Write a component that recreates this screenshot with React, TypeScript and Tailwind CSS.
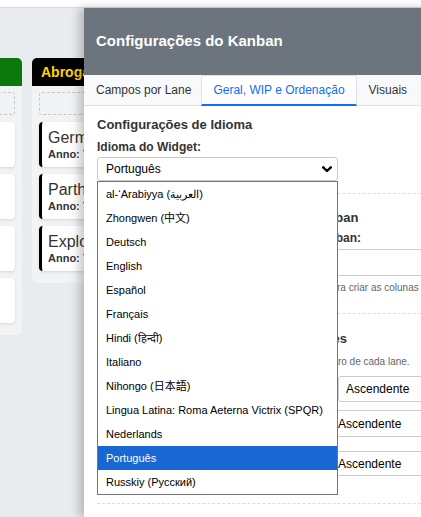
import React from 'react';

const languages = [
    'al-‘Arabiyya (العربية)',
    'Zhongwen (中文)',
    'Deutsch',
    'English',
    'Español',
    'Français',
    'Hindi (हिन्दी)',
    'Italiano',
    'Nihongo (日本語)',
    'Lingua Latina: Roma Aeterna Victrix (SPQR)',
    'Nederlands',
    'Português',
    'Russkiy (Русский)',
];

const laneOneCards = ['Roma', 'Italia', 'Gallia', 'Hispania'];
const laneTwoCards = ['Germania', 'Parthia', 'Exploratio'];

function Card({ title, bordered }: { title: string; bordered?: boolean }) {
    return (
        <div
            className={`flex h-[45px] flex-col justify-center rounded-[4px] bg-white pl-[6px] shadow-[0_1px_3px_rgba(0,0,0,0.12)] ${
                bordered ? 'border-l-[3px] border-black' : ''
            }`}
        >
            <div className="whitespace-nowrap text-[16px] leading-[19px] text-[#333]">{title}</div>
            <div className="mt-[1px] whitespace-nowrap text-[11px] font-bold leading-[13px] text-[#333]">Anno: 753</div>
        </div>
    );
}

function Chevron() {
    return (
        <svg width="10" height="7" viewBox="0 0 10 7" className="shrink-0">
            <path d="M1.2 1.3 L5 5 L8.8 1.3" fill="none" stroke="#000" strokeWidth="2.4" strokeLinecap="round" strokeLinejoin="round" />
        </svg>
    );
}

export default function App() {
    return (
        <div className="relative h-[517px] w-[421px] overflow-hidden bg-[#e9ecef] font-['Liberation_Sans',Arial,'Noto_Sans_CJK_SC',sans-serif] text-[#333]">
            <div className="h-[8px] border-b border-[#d9dcdf] bg-white" />

            {/* Kanban lanes behind the modal */}
            <div className="flex items-start gap-[10px] pt-[50px]">
                <div className="-ml-[128px] w-[150px] shrink-0 rounded-[5px] bg-[#f2f3f5] pb-[12px]">
                    <div className="flex h-[28px] items-center rounded-t-[5px] bg-[#0b780b] px-[9px] text-[14px] font-bold text-white">
                        Victoria
                    </div>
                    <div className="flex flex-col gap-[7px] px-[7px] pt-[6px]">
                        <div className="h-[23px] rounded-[3px] border border-dashed border-[#c3c6ca]" />
                        {laneOneCards.map((c) => (
                            <Card key={c} title={c} />
                        ))}
                    </div>
                </div>
                <div className="w-[180px] shrink-0 rounded-[5px] bg-[#f2f3f5] pb-[12px]">
                    <div className="flex h-[28px] items-center rounded-t-[5px] bg-black px-[9px] text-[14px] font-bold text-[#ffd400]">
                        Abrogata
                    </div>
                    <div className="flex flex-col gap-[7px] px-[7px] pt-[6px]">
                        <div className="h-[23px] rounded-[3px] border border-dashed border-[#c3c6ca]" />
                        {laneTwoCards.map((c) => (
                            <Card key={c} title={c} bordered />
                        ))}
                    </div>
                </div>
            </div>

            {/* Settings modal */}
            <div className="absolute bottom-0 left-[84px] top-[8px] w-[430px] bg-white shadow-[-5px_0_9px_rgba(0,0,0,0.22)]">
                <div className="flex h-[67px] items-center bg-[#6c757d] pl-[12px] text-[15px] font-bold text-white">
                    Configurações do Kanban
                </div>

                <div className="flex h-[31px] items-end border-b border-[#dee2e6] bg-[#f8f9fa] pl-[2px] text-[12px]">
                    <div className="flex h-[30px] items-center px-[10px] text-[#333]">Campos por Lane</div>
                    <div className="-mb-px flex h-[31px] items-center rounded-t-[3px] border border-b-2 border-[#dee2e6] border-b-[#0d6efd] bg-white px-[11px] text-[#0d6efd]">
                        Geral, WIP e Ordenação
                    </div>
                    <div className="flex h-[30px] items-center px-[12px] text-[#333]">Visuais</div>
                </div>

                <div className="px-[13px] pt-[11px]">
                    <div className="text-[13px] font-bold leading-[16px] text-[#333]">Configurações de Idioma</div>
                    <div className="mt-[7px] text-[12px] font-bold leading-[14px] text-[#333]">Idioma do Widget:</div>

                    <div className="relative mt-[3px] w-[241px]">
                        <div className="flex h-[24px] items-center justify-between rounded-[3px] border border-[#c8c8c8] bg-white pl-[8px] pr-[5px] text-[12px] text-black">
                            <span>Português</span>
                            <Chevron />
                        </div>

                        <div className="absolute left-0 top-[24px] z-10 h-[314px] w-[241px] border border-[#767676] bg-white">
                            {languages.map((lang) => (
                                <div
                                    key={lang}
                                    className={`h-[24px] whitespace-nowrap pl-[8px] text-[11px] leading-[24px] ${
                                        lang === 'Português' ? 'bg-[#1967d2] text-white' : 'text-black'
                                    }`}
                                >
                                    {lang}
                                </div>
                            ))}
                        </div>
                    </div>

                    <div className="mt-[12px] border-t border-dashed border-[#dddddd]" />

                    <div className="mt-[16px] whitespace-nowrap text-[13px] font-bold leading-[16px] text-[#333]">
                        Configurações de Colunas/Fila do Kanban
                    </div>
                    <div className="mt-[5px] whitespace-nowrap text-[12px] font-bold leading-[14px] text-[#333]">
                        Definição das Colunas / Lanes para o Kanban:
                    </div>
                    <div className="mt-[4px] h-[27px] rounded-[3px] border border-[#cccccc] bg-white" />
                    <div className="mt-[6px] whitespace-nowrap pl-[1px] text-[10px] leading-[12px] text-[#666]">
                        Informe os nomes das lanes separados por vírgula para criar as colunas do quadro.
                    </div>

                    <div className="mt-[19px] border-t border-dashed border-[#dddddd]" />

                    <div className="mt-[17px] whitespace-nowrap text-[13px] font-bold leading-[16px] text-[#333]">
                        Ordenação Padrão dos Cards nas Lanes
                    </div>
                    <div className="mt-[9px] whitespace-nowrap pl-[3px] text-[10px] leading-[12px] text-[#666]">
                        Defina campo e direção de ordenação dos cards dentro de cada lane.
                    </div>

                    <div className="mt-[8px] flex h-[26px] items-center">
                        <span className="w-[241px] shrink-0 text-[12px]">Lane 1</span>
                        <div className="flex h-full flex-1 items-center rounded-[3px] border border-[#cccccc] pl-[7px] text-[12px] text-black">
                            Ascendente
                        </div>
                    </div>
                    <div className="mt-[8px] flex h-[27px] items-center">
                        <span className="w-[233px] shrink-0 text-[12px]">Lane 2</span>
                        <div className="flex h-full flex-1 items-center rounded-[3px] border border-[#cccccc] pl-[7px] text-[12px] text-black">
                            Ascendente
                        </div>
                    </div>
                    <div className="mt-[14px] flex h-[25px] items-center">
                        <span className="w-[233px] shrink-0 text-[12px]">Lane 3</span>
                        <div className="flex h-full flex-1 items-center rounded-[3px] border border-[#cccccc] pl-[7px] text-[12px] text-black">
                            Ascendente
                        </div>
                    </div>

                    <div className="mt-[27px] border-t border-dashed border-[#dddddd]" />
                </div>
            </div>
        </div>
    );
}
